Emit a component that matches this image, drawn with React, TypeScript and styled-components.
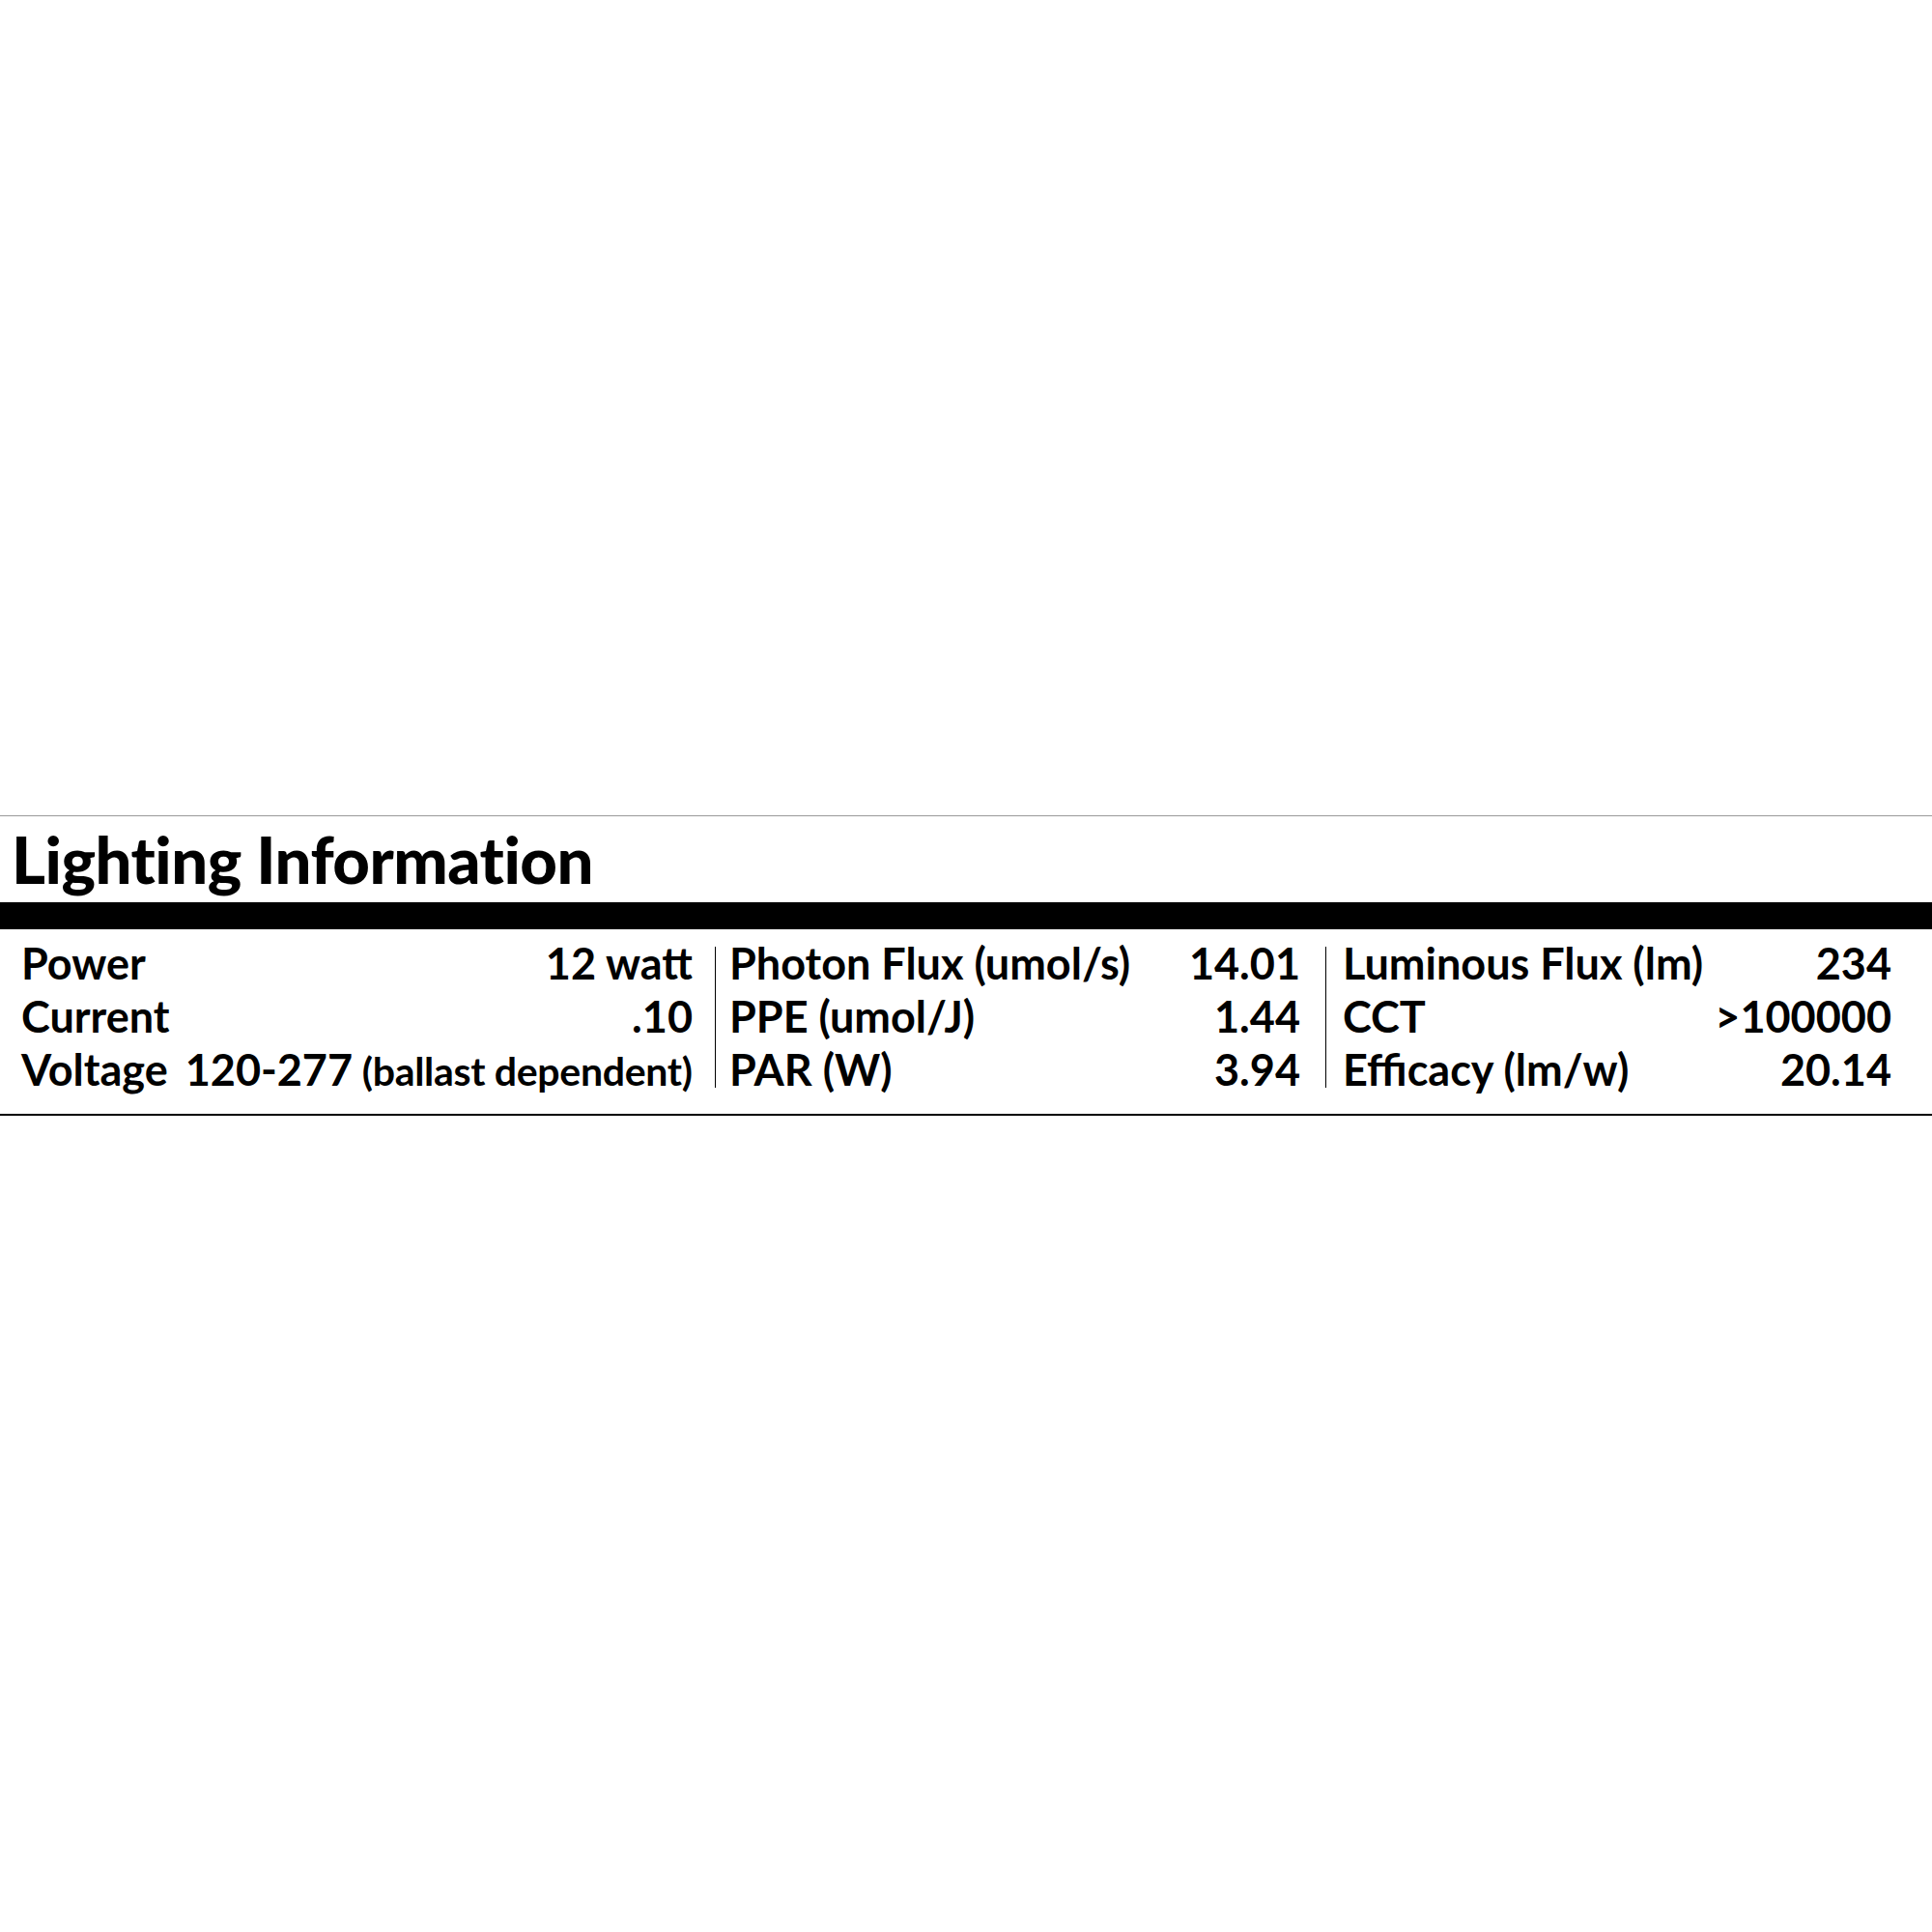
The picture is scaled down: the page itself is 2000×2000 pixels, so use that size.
import React from "react";
import styled, { createGlobalStyle } from "styled-components";

const GlobalStyle = createGlobalStyle`
  html, body {
    margin: 0;
    padding: 0;
    background: #ffffff;
  }
  body {
    font-family: Lato, "Liberation Sans", sans-serif;
    color: #000000;
  }
`;

const Section = styled.section`
  margin-top: 844px;
  border-top: 1px solid #9a9a9a;
  border-bottom: 2px solid #000000;
  width: 2000px;
`;

const Title = styled.h1`
  margin: 0;
  padding-left: 12px;
  height: 89px;
  line-height: 89px;
  font-size: 67px;
  font-weight: 900;
  letter-spacing: -0.5px;
`;

const Bar = styled.div`
  height: 28px;
  background: #000000;
`;

const Grid = styled.div`
  display: grid;
  grid-template-columns: 740px 1px 631px 1px 627px;
  align-items: center;
  padding: 8px 0 18px;
`;

const Column = styled.div<{ $left: number; $right: number }>`
  padding-left: ${(p) => p.$left}px;
  padding-right: ${(p) => p.$right}px;
`;

const Divider = styled.div`
  width: 1px;
  height: 146px;
  background: #000000;
`;

const Row = styled.div<{ $spread?: boolean }>`
  display: flex;
  justify-content: ${(p) => (p.$spread ? "flex-start" : "space-between")};
  gap: 18px;
  align-items: baseline;
  height: 55px;
  line-height: 55px;
  font-size: 45px;
  font-weight: 700;
  white-space: nowrap;
`;

const Label = styled.span``;

const Value = styled.span``;

const Note = styled.span`
  font-size: 41px;
  letter-spacing: -0.3px;
`;

type Item = { label: string; value: string; note?: string };

const columns: { left: number; right: number; items: Item[] }[] = [
  {
    left: 22,
    right: 23,
    items: [
      { label: "Power", value: "12 watt" },
      { label: "Current", value: ".10" },
      { label: "Voltage", value: "120-277", note: "(ballast dependent)" },
    ],
  },
  {
    left: 14,
    right: 26,
    items: [
      { label: "Photon Flux (umol/s)", value: "14.01" },
      { label: "PPE (umol/J)", value: "1.44" },
      { label: "PAR (W)", value: "3.94" },
    ],
  },
  {
    left: 17,
    right: 42,
    items: [
      { label: "Luminous Flux (lm)", value: "234" },
      { label: "CCT", value: ">100000" },
      { label: "Efficacy (lm/w)", value: "20.14" },
    ],
  },
];

export default function App() {
  return (
    <>
      <GlobalStyle />
      <Section>
        <Title>Lighting Information</Title>
        <Bar />
        <Grid>
          {columns.map((col, i) => (
            <React.Fragment key={"col" + i}>
              {i > 0 && <Divider />}
              <Column $left={col.left} $right={col.right}>
                {col.items.map((item) => (
                  <Row key={item.label} $spread={!!item.note}>
                    <Label>{item.label}</Label>
                    <Value>
                      {item.value}
                      {item.note && <Note> {item.note}</Note>}
                    </Value>
                  </Row>
                ))}
              </Column>
            </React.Fragment>
          ))}
        </Grid>
      </Section>
    </>
  );
}
